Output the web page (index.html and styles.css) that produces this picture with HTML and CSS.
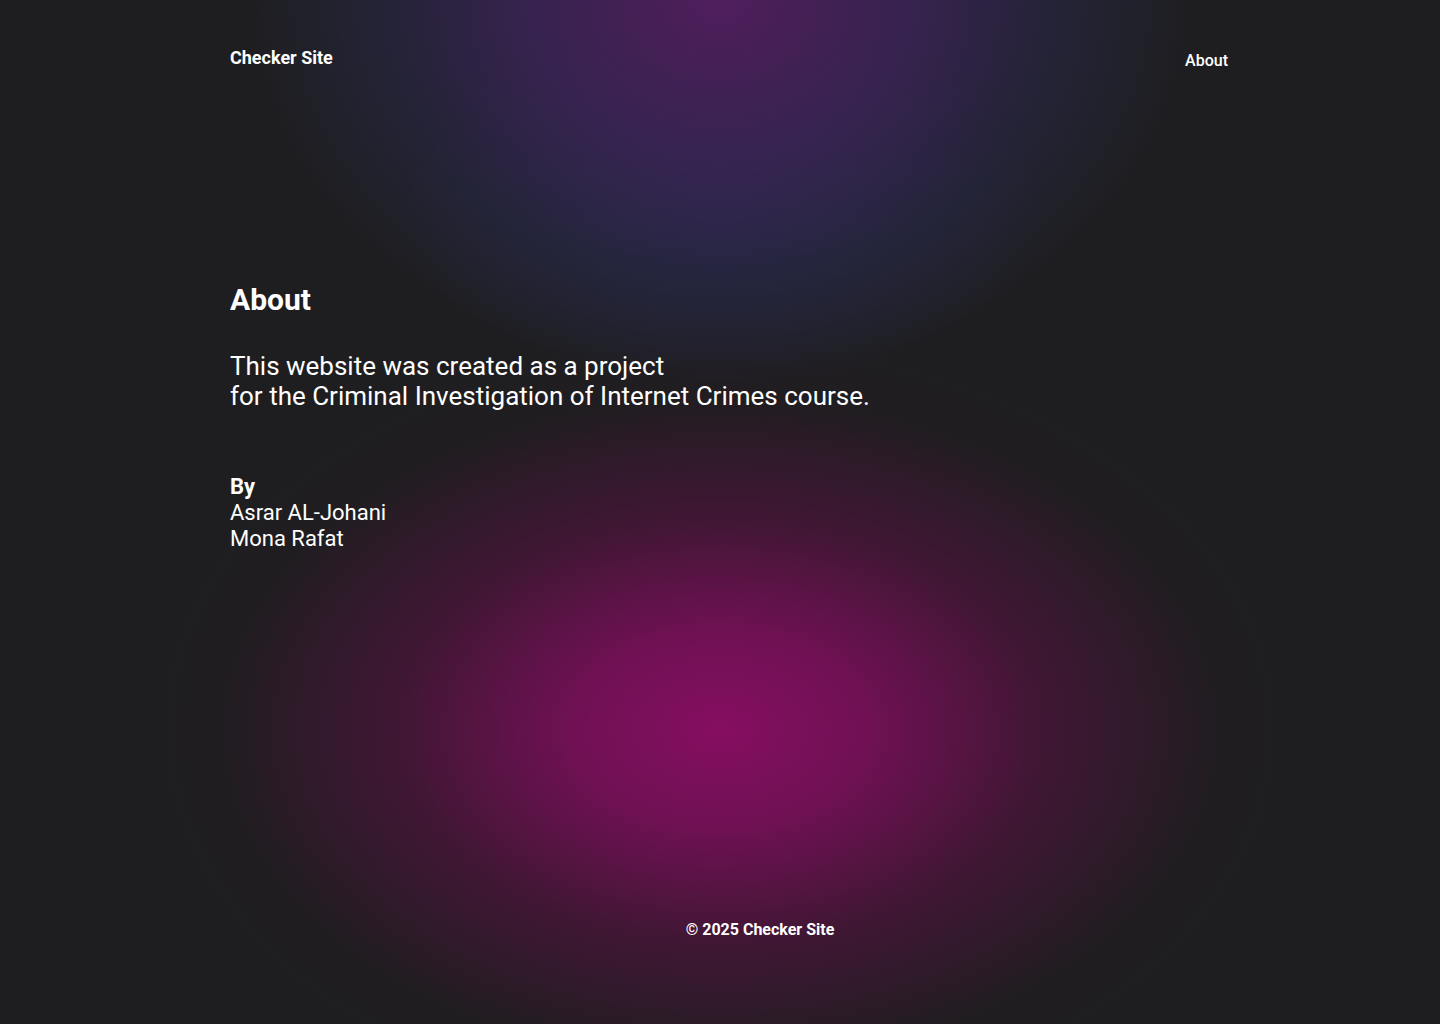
FILE: index.html
```html
<!DOCTYPE html>
<html lang="en">
<head>
<meta charset="utf-8">
<title>About - Checker Site</title>
<link rel="stylesheet" href="styles.css">
</head>
<body>
<div class="page">
  <header class="header">
    <div class="brand">Checker Site</div>
    <nav class="nav"><a class="nav-link" href="#">About</a></nav>
  </header>
  <main class="main">
    <h1 class="title">About</h1>
    <p class="lead">This website was created as a project<br>for the Criminal Investigation of Internet Crimes course.</p>
    <div class="authors">
      <div class="by">By</div>
      <div class="name">Asrar AL-Johani</div>
      <div class="name">Mona Rafat</div>
    </div>
  </main>
  <footer class="footer">© 2025 Checker Site</footer>
</div>
</body>
</html>
```
FILE: styles.css
```css
html, body {
  margin: 0;
  padding: 0;
}
body {
  font-family: Roboto, "Liberation Sans", sans-serif;
  color: #ffffff;
  background-color: #1e1e20;
  background-image:
    radial-gradient(ellipse 500px 330px at 720px 730px, rgba(134, 14, 98, 1) 0%, rgba(118, 16, 88, 0.9) 30%, rgba(80, 20, 62, 0.6) 65%, rgba(30, 30, 32, 0) 100%),
    radial-gradient(ellipse 580px 400px at 720px 730px, rgba(60, 20, 45, 0.55) 0%, rgba(30, 30, 32, 0) 100%),
    radial-gradient(ellipse 480px 380px at 720px 0px, rgba(80, 30, 92, 1) 0%, rgba(60, 36, 90, 0.8) 40%, rgba(40, 40, 74, 0.5) 72%, rgba(30, 30, 32, 0) 100%),
    radial-gradient(ellipse 320px 180px at 720px 210px, rgba(42, 44, 82, 0.6) 0%, rgba(30, 30, 32, 0) 100%);
  background-repeat: no-repeat;
  min-height: 1024px;
}
.page {
  min-height: 1024px;
  display: flex;
  flex-direction: column;
}
.header {
  display: flex;
  justify-content: space-between;
  align-items: flex-start;
  padding: 47px 212px 0 230px;
}
.brand {
  font-size: 18px;
  font-weight: 700;
  line-height: 22px;
}
.nav {
  padding-top: 3px;
}
.nav-link {
  color: #ffffff;
  text-decoration: none;
  font-size: 16px;
  font-weight: 500;
  line-height: 22px;
}
.main {
  padding: 0 212px 0 230px;
}
.title {
  margin: 210px 0 0 0;
  font-size: 30px;
  font-weight: 700;
  line-height: 36px;
}
.lead {
  margin: 33px 0 0 0;
  font-size: 26px;
  font-weight: 400;
  line-height: 30px;
}
.authors {
  margin-top: 63px;
  font-size: 22px;
  line-height: 26px;
}
.by {
  font-weight: 700;
}
.name {
  font-weight: 400;
}
.footer {
  margin-top: 367px;
  padding-left: 80px;
  text-align: center;
  font-size: 16px;
  font-weight: 700;
  line-height: 22px;
}
```
